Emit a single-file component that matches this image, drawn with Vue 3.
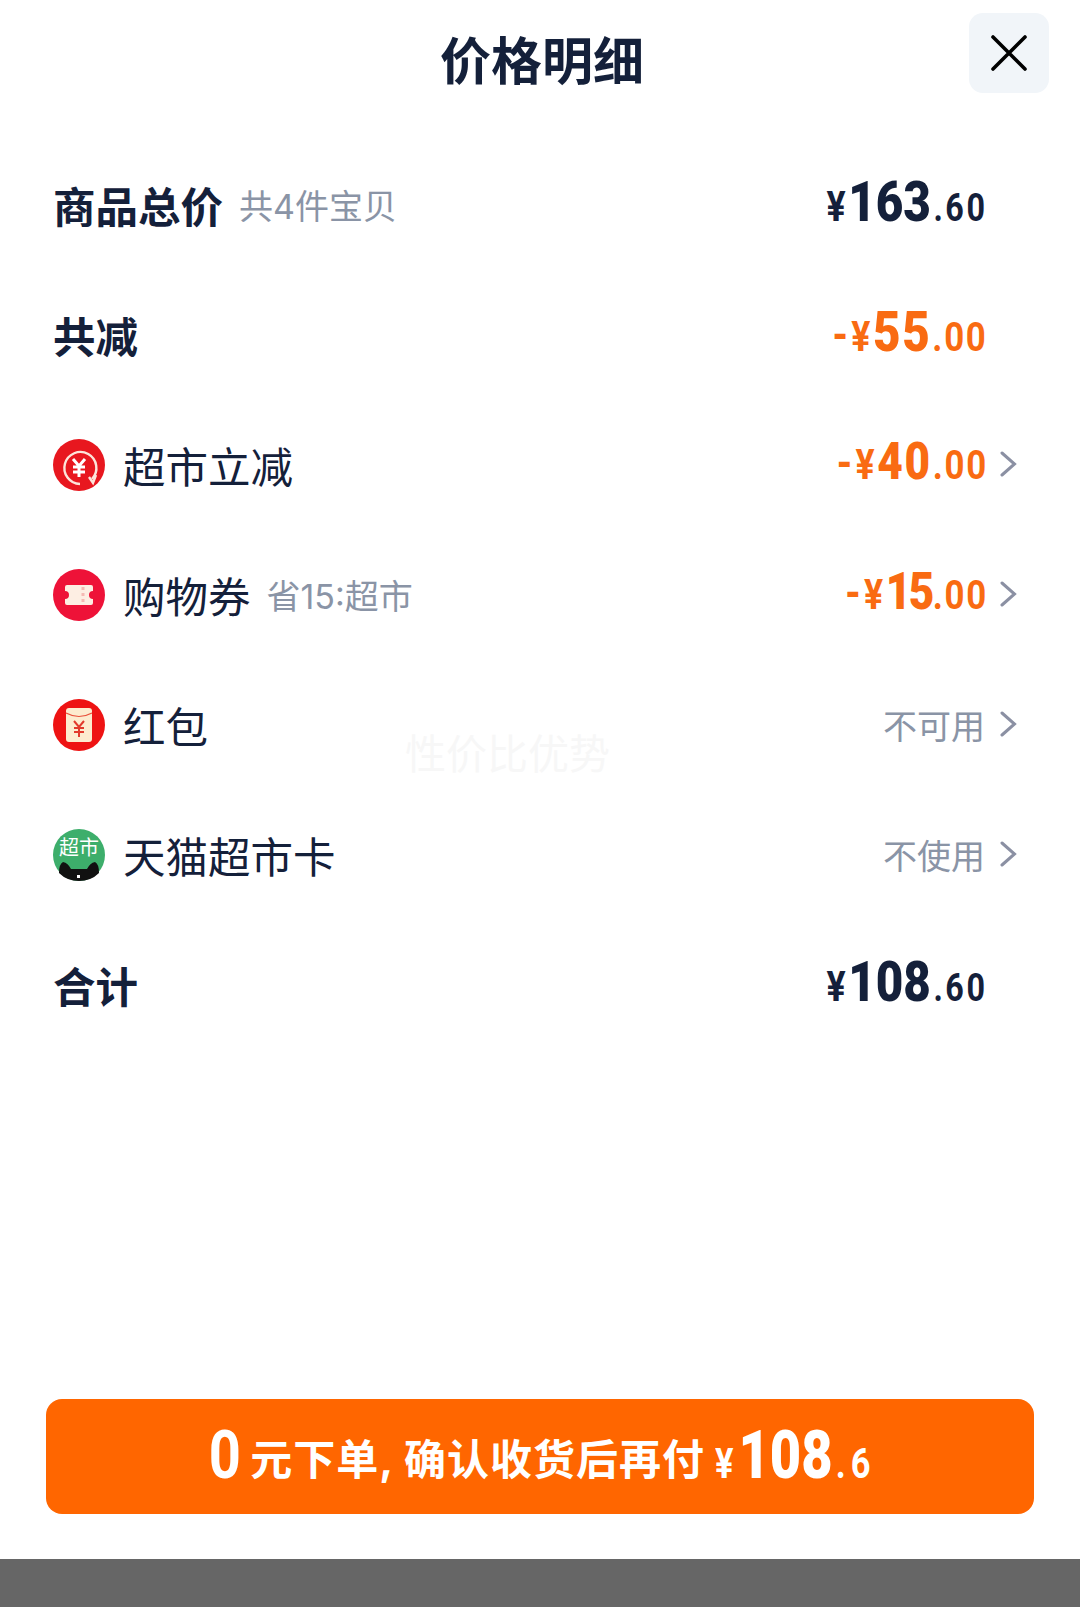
<template>
  <div class="page">
    <section class="sheet">
      <header class="sheet__head">
        <h1 class="sheet__title">价格明细</h1>
        <button class="sheet__close" type="button" aria-label="关闭">
          <svg width="36" height="36" viewBox="0 0 36 36">
            <path d="M2 2 L34 34 M34 2 L2 34" stroke="#000" stroke-width="3.6" stroke-linecap="round" fill="none" />
          </svg>
        </button>
      </header>

      <div class="rows">
        <div class="row">
          <span class="row__label row__label--bold">商品总价</span>
          <span class="row__sub">共4件宝贝</span>
          <span class="price"><i class="price__sym">¥</i><b class="price__int">163</b><i class="price__dec">.60</i></span>
          <span class="row__arrow"></span>
        </div>
        <div class="row">
          <span class="row__label row__label--bold">共减</span>
          <span class="price price--orange"><i class="price__minus">-</i><i class="price__sym">¥</i><b class="price__int">55</b><i class="price__dec">.00</i></span>
          <span class="row__arrow"></span>
        </div>

        <div class="row">
          <svg class="row__icon" viewBox="0 0 52 52">
            <circle cx="26" cy="26" r="26" fill="#e8171f" />
            <path d="M39 40 A16 16 0 1 0 27 45" stroke="#fde4da" stroke-width="2.400" fill="none" />
            <path d="M36 38 L40 44 L43 36" stroke="#fde4da" stroke-width="2.400" fill="none" />
            <path d="M20 20 L26 27 L32 20 M20 28 H32 M20 33 H32 M26 27 V38" stroke="#fff" stroke-width="3" fill="none" />
          </svg>
          <span class="row__label">超市立减</span>
          <span class="price price--orange price--sm"><i class="price__minus">-</i><i class="price__sym">¥</i><b class="price__int">40</b><i class="price__dec">.00</i></span>
          <span class="row__arrow"><svg width="17" height="26" viewBox="0 0 17 26"><path d="M2 2 L14.500 13 L2 24" stroke="#8b90a3" stroke-width="3" stroke-linecap="round" fill="none" /></svg></span>
        </div>

        <div class="row">
          <svg class="row__icon" viewBox="0 0 52 52">
            <circle cx="26" cy="26" r="26" fill="#ee1238" />
            <path d="M14 16 H38 Q40 16 40 18 V22 A4 4 0 0 0 40 30 V34 Q40 36 38 36 H14 Q12 36 12 34 V30 A4 4 0 0 0 12 22 V18 Q12 16 14 16 Z" fill="#fdeee3" />
            <path d="M30 18 V34" stroke="#f5b9b4" stroke-width="3" stroke-dasharray="3 3" />
          </svg>
          <span class="row__label">购物券</span>
          <span class="row__sub">省15:超市</span>
          <span class="price price--orange price--sm"><i class="price__minus">-</i><i class="price__sym">¥</i><b class="price__int price__int--tight">15</b><i class="price__dec">.00</i></span>
          <span class="row__arrow"><svg width="17" height="26" viewBox="0 0 17 26"><path d="M2 2 L14.500 13 L2 24" stroke="#8b90a3" stroke-width="3" stroke-linecap="round" fill="none" /></svg></span>
        </div>

        <div class="row">
          <svg class="row__icon" viewBox="0 0 52 52">
            <circle cx="26" cy="26" r="26" fill="#ee1313" />
            <rect x="13" y="9" width="26" height="34" rx="3" fill="#fdeccf" />
            <path d="M13 14 Q26 21 39 14" stroke="#e8503a" stroke-width="1.200" fill="none" />
            <path d="M21 22 L26 28 L31 22 M21 29 H31 M21 33 H31 M26 28 V38" stroke="#e23a2c" stroke-width="2" fill="none" />
          </svg>
          <span class="row__label">红包</span>
          <span class="row__status">不可用</span>
          <span class="row__arrow"><svg width="17" height="26" viewBox="0 0 17 26"><path d="M2 2 L14.500 13 L2 24" stroke="#8b90a3" stroke-width="3" stroke-linecap="round" fill="none" /></svg></span>
        </div>

        <div class="row">
          <svg class="row__icon" viewBox="0 0 52 52">
            <circle cx="26" cy="26" r="26" fill="#3dae6b" />
            <text x="26" y="26" text-anchor="middle" class="row__icon-text">超市</text>
            <path d="M6 44 Q6 35 10 33 Q15 34 18 40 H34 Q37 34 42 33 Q46 35 46 44 Q38 52 26 52 Q14 52 6 44 Z" fill="#111" />
            <rect x="24" y="46" width="3" height="3" fill="#fff" />
          </svg>
          <span class="row__label">天猫超市卡</span>
          <span class="row__status">不使用</span>
          <span class="row__arrow"><svg width="17" height="26" viewBox="0 0 17 26"><path d="M2 2 L14.500 13 L2 24" stroke="#8b90a3" stroke-width="3" stroke-linecap="round" fill="none" /></svg></span>
        </div>

        <div class="row">
          <span class="row__label row__label--bold">合计</span>
          <span class="price"><i class="price__sym">¥</i><b class="price__int">108</b><i class="price__dec">.60</i></span>
          <span class="row__arrow"></span>
        </div>
      </div>

      <span class="watermark">性价比优势</span>

      <button class="pay" type="button">
        <b class="pay__zero">0</b>
        <span class="pay__text">元下单, 确认收货后再付</span>
        <span class="pay__amount"><i class="pay__sym">¥</i><b class="pay__int">108</b><i class="pay__dec">.6</i></span>
      </button>
    </section>
    <div class="footer"></div>
  </div>
</template>

<script setup>
</script>

<style>
html,
body {
  margin: 0;
  background: #fff;
}
</style>

<style scoped>
.page {
  display: flex;
  flex-direction: column;
  height: 1607px;
  font-family: Inter, 'Noto Sans CJK SC', sans-serif;
  color: #14203a;
}

.sheet {
  position: relative;
  display: flex;
  flex-direction: column;
  flex: 1;
  padding: 13px 31px 45px 46px;
  box-sizing: border-box;
}

.sheet__head {
  display: flex;
  align-items: center;
  justify-content: center;
  height: 96px;
  margin: 0 15px 33px 0;
  position: relative;
}

.sheet__title {
  margin: 2px 0 0 4px;
  font-size: 51px;
  line-height: 96px;
  font-weight: 700;
}

.sheet__close {
  position: absolute;
  top: 0;
  right: -15px;
  display: flex;
  align-items: center;
  justify-content: center;
  width: 80px;
  height: 80px;
  padding: 0;
  border: 0;
  border-radius: 14px;
  background: #f1f5f9;
}

.rows {
  display: flex;
  flex-direction: column;
  flex: 1;
  padding-left: 7px;
  padding-right: 32px;
}

.row {
  display: flex;
  align-items: center;
  height: 130px;
}

.row__icon {
  flex: 0 0 auto;
  width: 52px;
  height: 52px;
  margin: 0 18px 4px 0;
}

.row__icon-text {
  font-family: 'Noto Sans CJK SC', sans-serif;
  font-size: 20px;
  fill: #fff;
}

.row__label {
  font-size: 42.500px;
  line-height: 1.2;
}

.row__label--bold {
  font-weight: 700;
}

.row__sub {
  margin: 0 0 6px 16px;
  font-size: 34px;
  color: #8a94a6;
}

.row__status {
  margin: 0 0 6px auto;
  font-size: 34px;
  color: #8a94a6;
}

.row__arrow {
  display: flex;
  justify-content: flex-end;
  flex: 0 0 32px;
  width: 32px;
  margin-bottom: 6px;
}

/* Roboto squeezed a little, closest installed face to the DIN-like digits */
.price {
  display: flex;
  align-items: baseline;
  margin: 0 -3px 10px auto;
  font-family: Roboto, sans-serif;
  font-weight: 700;
  line-height: 1;
  transform: scaleX(0.85);
  transform-origin: right center;
}

.row__arrow:not(:empty) {
  margin-left: 3px;
  flex-basis: 29px;
  width: 29px;
}

.price i {
  font-style: normal;
}

.price--orange {
  color: #f96b12;
}

.price__minus {
  font-size: 46px;
  margin-right: 4px;
}

.price__sym {
  font-size: 42px;
  letter-spacing: 3px;
}

.price__int {
  font-size: 56px;
}

.price--orange .price__int {
  letter-spacing: 2px;
}

.price--orange .price__int--tight {
  letter-spacing: -3px;
}

.price__dec {
  margin-left: 3px;
  font-size: 38px;
  letter-spacing: 3px;
}

.price--orange .price__dec {
  margin-left: 1px;
  font-size: 41px;
  letter-spacing: 2px;
}

.price--sm .price__int {
  font-size: 52px;
}

.watermark {
  position: absolute;
  left: 405px;
  top: 730px;
  font-size: 41px;
  line-height: 48px;
  color: #f7f7f7;
}

.pay {
  display: flex;
  align-items: baseline;
  justify-content: center;
  flex: 0 0 auto;
  width: 988px;
  height: 115px;
  padding: 24px 0 0 6px;
  border: 0;
  border-radius: 16px;
  background: #ff6600;
  color: #fff;
  font-family: Inter, 'Noto Sans CJK SC', sans-serif;
  box-sizing: border-box;
}

.pay__zero {
  display: inline-block;
  margin: 0 -3px;
  font-family: Roboto, sans-serif;
  font-size: 66px;
  line-height: 1;
  transform: scaleX(0.85);
}

.pay__text {
  margin: 0 10px 0 9px;
  font-size: 42px;
  font-weight: 700;
  letter-spacing: 1px;
  transform: translateY(-3px);
}

.pay__amount {
  display: inline-flex;
  align-items: baseline;
  margin-right: -34px;
  font-family: Roboto, sans-serif;
  font-weight: 700;
  transform: scaleX(0.82);
  transform-origin: left center;
}

.pay__sym,
.pay__dec {
  font-style: normal;
  font-size: 42px;
  letter-spacing: 6px;
}

.pay__int {
  font-size: 66px;
  line-height: 1;
}

.pay__dec {
  margin-left: 4px;
}

.footer {
  flex: 0 0 48px;
  background: #666;
}
</style>
